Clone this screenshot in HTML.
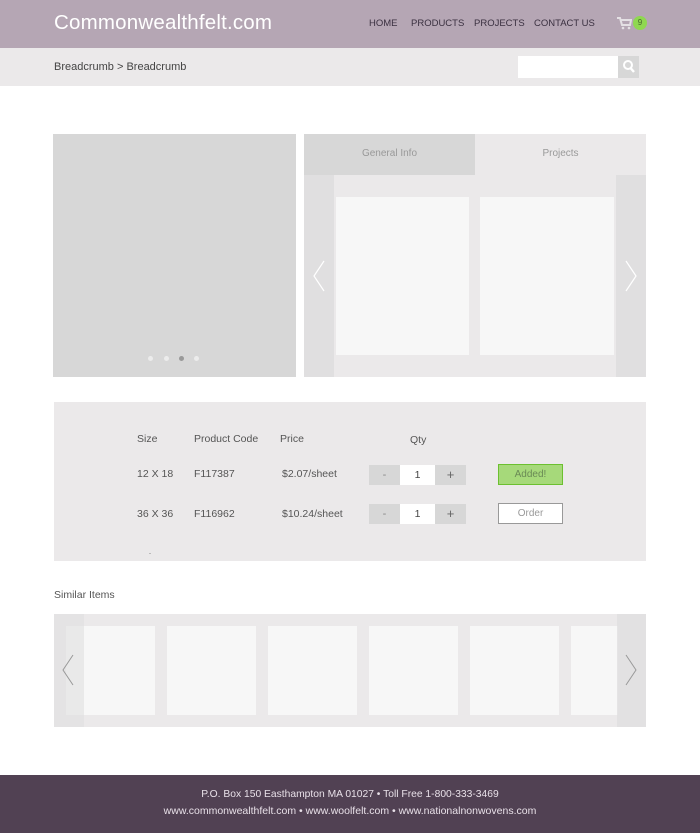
<!DOCTYPE html>
<html><head><meta charset="utf-8"><style>
*{margin:0;padding:0;box-sizing:border-box}
body{width:700px;height:833px;background:#fff;font-family:"Liberation Sans",sans-serif;position:relative;overflow:hidden;color:#444}
.a{position:absolute}
.t{font-size:10.5px;color:#555}
</style></head><body>
<div class="a" style="left:0;top:0;width:700px;height:48px;background:#b5a6b4"></div>
<div class="a" style="left:54px;top:11px;font-size:20.5px;color:#fff;letter-spacing:0.2px">Commonwealthfelt.com</div>
<div class="a" style="left:369px;top:18px;font-size:9.5px;color:#3a3040">HOME</div>
<div class="a" style="left:411px;top:18px;font-size:9.5px;color:#3a3040">PRODUCTS</div>
<div class="a" style="left:474px;top:18px;font-size:9.5px;color:#3a3040">PROJECTS</div>
<div class="a" style="left:534px;top:18px;font-size:9.5px;color:#3a3040">CONTACT US</div>
<svg class="a" style="left:616px;top:16px" width="16" height="14" viewBox="0 0 16 14"><path d="M1 2h3l2 7h8l1-5H5" fill="none" stroke="#e4e0e4" stroke-width="2"/><circle cx="7" cy="12" r="1.3" fill="#e4e0e4"/><circle cx="13" cy="12" r="1.3" fill="#e4e0e4"/></svg>
<div class="a" style="left:633px;top:16px;width:14px;height:14px;border-radius:50%;background:#8fd850;font-size:8px;color:#4a6a30;text-align:center;line-height:14px">9</div>
<div class="a" style="left:0;top:48px;width:700px;height:38px;background:#ebe9ea"></div>
<div class="a" style="left:54px;top:61px;font-size:11px;color:#444">Breadcrumb &gt; Breadcrumb</div>
<div class="a" style="left:518px;top:56px;width:100px;height:22px;background:#fff"></div>
<div class="a" style="left:618px;top:56px;width:21px;height:22px;background:#d7d7d7"></div>
<svg class="a" style="left:622px;top:59px" width="14" height="15" viewBox="0 0 14 15"><circle cx="6" cy="6" r="4" fill="none" stroke="#fff" stroke-width="2"/><path d="M8.5 9l3.5 4" stroke="#fff" stroke-width="2.4"/></svg>

<div class="a" style="left:53px;top:134px;width:243px;height:243px;background:#d7d7d7"></div>
<div class="a" style="left:148px;top:356px;width:5px;height:5px;border-radius:50%;background:#ececec"></div>
<div class="a" style="left:164px;top:356px;width:5px;height:5px;border-radius:50%;background:#ececec"></div>
<div class="a" style="left:179px;top:356px;width:5px;height:5px;border-radius:50%;background:#999"></div>
<div class="a" style="left:194px;top:356px;width:5px;height:5px;border-radius:50%;background:#ececec"></div>

<div class="a" style="left:304px;top:134px;width:342px;height:243px;background:#ebe9ea"></div>
<div class="a" style="left:304px;top:134px;width:171px;height:41px;background:#d7d7d7;font-size:10px;color:#999;text-align:center;line-height:40px">General Info</div>
<div class="a" style="left:475px;top:134px;width:171px;height:41px;font-size:10px;color:#999;text-align:center;line-height:40px">Projects</div>
<div class="a" style="left:304px;top:175px;width:30px;height:202px;background:#e0dfe0"></div>
<div class="a" style="left:616px;top:175px;width:30px;height:202px;background:#e0dfe0"></div>
<svg class="a" style="left:312px;top:260px" width="14" height="32"><path d="M12 1L2 16l10 15" fill="none" stroke="#fff" stroke-width="1.2"/></svg>
<svg class="a" style="left:624px;top:260px" width="14" height="32"><path d="M2 1l10 15L2 31" fill="none" stroke="#fff" stroke-width="1.2"/></svg>
<div class="a" style="left:336px;top:197px;width:133px;height:158px;background:#f7f7f7"></div>
<div class="a" style="left:480px;top:197px;width:134px;height:158px;background:#f7f7f7"></div>

<div class="a" style="left:54px;top:402px;width:592px;height:159px;background:#ebe9ea"></div>
<div class="a t" style="left:137px;top:433px">Size</div>
<div class="a t" style="left:194px;top:433px">Product Code</div>
<div class="a t" style="left:280px;top:433px">Price</div>
<div class="a t" style="left:410px;top:434px">Qty</div>
<div class="a t" style="left:137px;top:468px">12 X 18</div>
<div class="a t" style="left:194px;top:468px">F117387</div>
<div class="a t" style="left:282px;top:468px">$2.07/sheet</div>
<div class="a t" style="left:137px;top:508px">36 X 36</div>
<div class="a t" style="left:194px;top:508px">F116962</div>
<div class="a t" style="left:282px;top:508px">$10.24/sheet</div>
<div class="a" style="left:149px;top:553px;width:2px;height:1px;background:#bbb"></div>

<div class="a" style="left:369px;top:465px;width:31px;height:20px;background:#d7d7d7;text-align:center;font-size:11px;line-height:20px;color:#888">-</div>
<div class="a" style="left:400px;top:465px;width:35px;height:20px;background:#fff;text-align:center;font-size:10.5px;line-height:20px;color:#444">1</div>
<div class="a" style="left:435px;top:465px;width:31px;height:20px;background:#d7d7d7;text-align:center;font-size:13px;line-height:20px;color:#666">+</div>
<div class="a" style="left:369px;top:504px;width:31px;height:20px;background:#d7d7d7;text-align:center;font-size:11px;line-height:20px;color:#888">-</div>
<div class="a" style="left:400px;top:504px;width:35px;height:20px;background:#fff;text-align:center;font-size:10.5px;line-height:20px;color:#444">1</div>
<div class="a" style="left:435px;top:504px;width:31px;height:20px;background:#d7d7d7;text-align:center;font-size:13px;line-height:20px;color:#666">+</div>
<div class="a" style="left:498px;top:464px;width:65px;height:21px;background:#a6d97a;border:1px solid #6cc030;text-align:center;font-size:10px;line-height:19px;color:#6a8a55">Added!</div>
<div class="a" style="left:498px;top:503px;width:65px;height:21px;background:#fff;border:1px solid #999;text-align:center;font-size:10px;line-height:19px;color:#999">Order</div>

<div class="a t" style="left:54px;top:589px">Similar Items</div>
<div class="a" style="left:54px;top:614px;width:592px;height:113px;background:#ebe9ea"></div>
<div class="a" style="left:66px;top:626px;width:89px;height:89px;background:#f7f7f7"></div>
<div class="a" style="left:167px;top:626px;width:89px;height:89px;background:#f7f7f7"></div>
<div class="a" style="left:268px;top:626px;width:89px;height:89px;background:#f7f7f7"></div>
<div class="a" style="left:369px;top:626px;width:89px;height:89px;background:#f7f7f7"></div>
<div class="a" style="left:470px;top:626px;width:89px;height:89px;background:#f7f7f7"></div>
<div class="a" style="left:571px;top:626px;width:47px;height:89px;background:#f7f7f7"></div>
<div class="a" style="left:54px;top:614px;width:30px;height:113px;background:rgba(224,223,224,0.6)"></div>
<div class="a" style="left:617px;top:614px;width:29px;height:113px;background:rgba(224,223,224,0.8)"></div>
<svg class="a" style="left:61px;top:654px" width="14" height="32"><path d="M12 1L2 16l10 15" fill="none" stroke="#999" stroke-width="1"/></svg>
<svg class="a" style="left:624px;top:654px" width="14" height="32"><path d="M2 1l10 15L2 31" fill="none" stroke="#999" stroke-width="1"/></svg>

<div class="a" style="left:0;top:775px;width:700px;height:58px;background:#514153"></div>
<div class="a" style="left:0;top:789px;width:700px;text-align:center;font-size:10.3px;color:#e8e0e8">P.O. Box 150 Easthampton MA 01027 • Toll Free 1-800-333-3469</div>
<div class="a" style="left:0;top:805px;width:700px;text-align:center;font-size:10.5px;color:#e8e0e8">www.commonwealthfelt.com • www.woolfelt.com • www.nationalnonwovens.com</div>
</body></html>
